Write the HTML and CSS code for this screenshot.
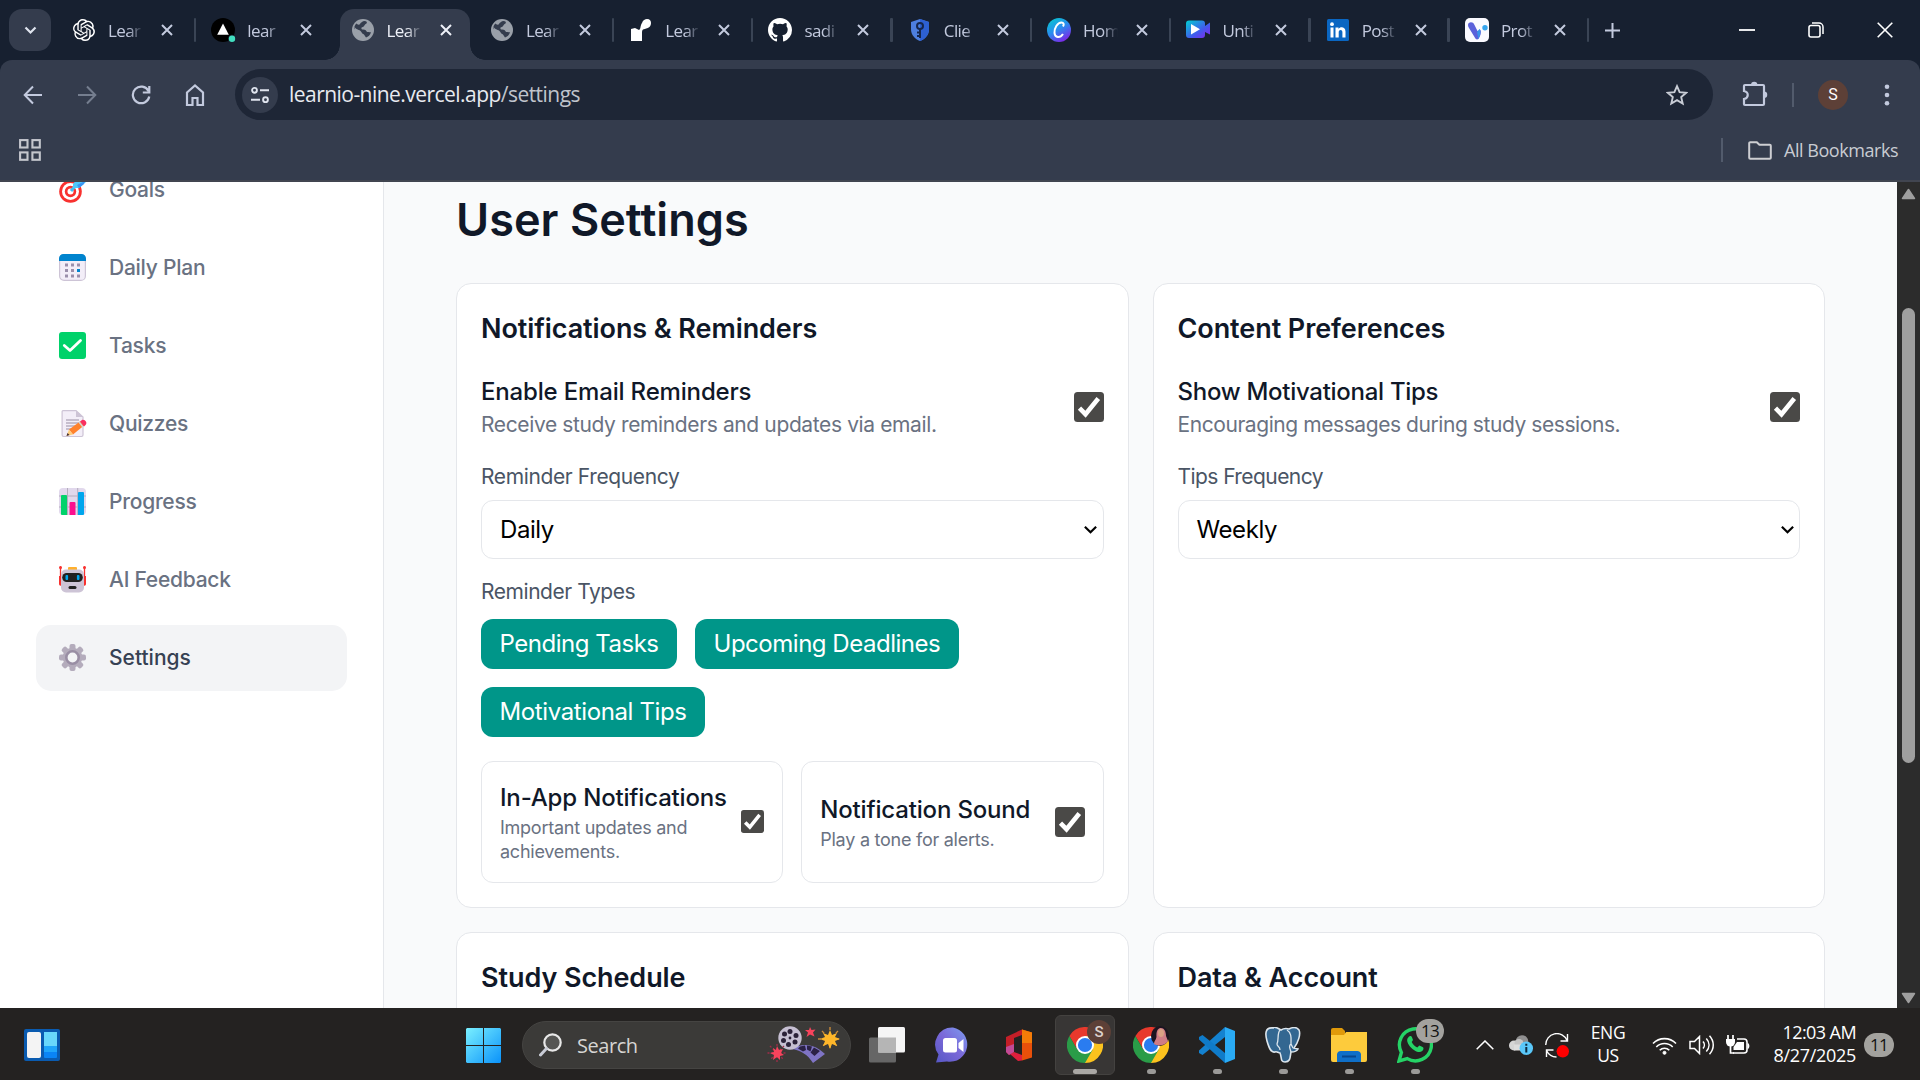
FILE: index.html
```html
<!DOCTYPE html>
<html lang="en">
<head>
<meta charset="utf-8">
<title>User Settings</title>
<link rel="stylesheet" href="styles.css">
</head>
<body>
<svg class="defs" aria-hidden="true">
  <defs>
    <symbol id="close" viewBox="0 0 14 14"><path d="M2 2l10 10M12 2L2 12" fill="none" stroke="currentColor" stroke-width="2"/></symbol>
    <symbol id="globe" viewBox="0 0 22 22"><circle cx="11" cy="11" r="11" fill="#9aa0a9"/><path d="M12.500 2c2 0 3 1 2 2.500-2 .5-2 3-3.500 3.500-2 0-2 1.500-1 2.500 3-.5 4.500 1 5 2.500 1.500 0 3 .5 4 0-.5 3-3 5-5 5.500-1-1-1.500-3-3-3.500-2 0-3-1.500-3-3L2 10c0-2 1-4.500 2.500-5.500C6 6 7.500 6 8 5s2.500-3 4.500-3z" fill="#343c4d"/><path d="M2.500 7.500c1 3 4 3 5.500 4s2 3 3 3.500c1 1 .5 3 0 4.500-5 0-8.500-3-8.700-8z" fill="#9aa0a9"/></symbol>
    <symbol id="tick" viewBox="0 0 30 30"><rect width="30" height="30" rx="3.500" fill="#4a4947"/><path d="M5.500 16.200l6 6L24.300 6.500" fill="none" stroke="#fff" stroke-width="4.600"/></symbol>
    <symbol id="chev" viewBox="0 0 16 10"><path d="M2 1.500l6 6 6-6" fill="none" stroke="currentColor" stroke-width="2.300"/></symbol>
    <symbol id="chrome" viewBox="0 0 36 36"><path d="M18 18L33.600 9A18 18 0 0 1 18 36z" fill="#fcc31e"/><path d="M18 9h15.600L25.800 22.500z" fill="#fcc31e"/><path d="M18 9h15.600A18 18 0 0 0 2.400 9l7.800 13.500z" fill="#e8392c"/><path d="M10.200 22.500L2.400 9A18 18 0 0 0 18 36l7.800-13.500z" fill="#2a9c48"/><circle cx="18" cy="18" r="9" fill="#fff"/><circle cx="18" cy="18" r="7.100" fill="#2a7cf0"/></symbol>
  </defs>
</svg>

<header class="chrome">
  <div class="tabstrip">
    <div class="tab-search"><svg width="13" height="9" viewBox="0 0 13 9"><path d="M1.500 1.500l5 5 5-5" fill="none" stroke="#dfe4ee" stroke-width="2.200"/></svg></div>
    <div class="tab sep"><svg class="fav g" viewBox="0 0 24 24"><path fill="#fff" d="M22.2819 9.8211a5.9847 5.9847 0 0 0-.5157-4.9108 6.0462 6.0462 0 0 0-6.5098-2.9A6.0651 6.0651 0 0 0 4.9807 4.1818a5.9847 5.9847 0 0 0-3.9977 2.9 6.0462 6.0462 0 0 0 .7427 7.0966 5.98 5.98 0 0 0 .511 4.9107 6.051 6.051 0 0 0 6.5146 2.9001A5.9847 5.9847 0 0 0 13.2599 24a6.0557 6.0557 0 0 0 5.7718-4.2058 5.9894 5.9894 0 0 0 3.9977-2.9001 6.0557 6.0557 0 0 0-.7475-7.0729zm-9.022 12.6081a4.4755 4.4755 0 0 1-2.8764-1.0408l.1419-.0804 4.7783-2.7582a.7948.7948 0 0 0 .3927-.6813v-6.7369l2.02 1.1686a.071.071 0 0 1 .038.052v5.5826a4.504 4.504 0 0 1-4.4945 4.4944zm-9.6607-4.1254a4.4708 4.4708 0 0 1-.5346-3.0137l.142.0852 4.783 2.7582a.7712.7712 0 0 0 .7806 0l5.8428-3.3685v2.3324a.0804.0804 0 0 1-.0332.0615L9.74 19.9502a4.4992 4.4992 0 0 1-6.1408-1.6464zM2.3408 7.8956a4.485 4.485 0 0 1 2.3655-1.9728V11.6a.7664.7664 0 0 0 .3879.6765l5.8144 3.3543-2.0201 1.1685a.0757.0757 0 0 1-.071 0l-4.8303-2.7865A4.504 4.504 0 0 1 2.3408 7.872zm16.5963 3.8558L13.1038 8.364 15.1192 7.2a.0757.0757 0 0 1 .071 0l4.8303 2.7913a4.4944 4.4944 0 0 1-.6765 8.1042v-5.6772a.79.79 0 0 0-.407-.667zm2.0107-3.0231l-.142-.0852-4.7735-2.7818a.7759.7759 0 0 0-.7854 0L9.409 9.2297V6.8974a.0662.0662 0 0 1 .0284-.0615l4.8303-2.7866a4.4992 4.4992 0 0 1 6.6802 4.66zM8.3065 12.863l-2.02-1.1638a.0804.0804 0 0 1-.038-.0567V6.0742a4.4992 4.4992 0 0 1 7.3757-3.4537l-.142.0805L8.704 5.459a.7948.7948 0 0 0-.3927.6813zm1.0976-2.3654l2.602-1.4998 2.6069 1.4998v2.9994l-2.5974 1.4997-2.6067-1.4997Z"/></svg><span class="tt">Lear</span><svg class="x"><use href="#close"/></svg></div>
    <div class="tab"><svg class="fav" viewBox="0 0 24 24"><circle cx="12" cy="12" r="12"/><path d="M12 5.500l5.800 11.200H6.200z" fill="#fff"/><circle cx="21" cy="20.800" r="4" fill="#172030"/><circle cx="21" cy="20.800" r="3.200" fill="#42dfc0"/></svg><span class="tt">lear</span><svg class="x"><use href="#close"/></svg></div>
    <div class="tab active"><svg class="fav g"><use href="#globe"/></svg><span class="tt">Lear</span><svg class="x"><use href="#close"/></svg></div>
    <div class="tab sep"><svg class="fav g"><use href="#globe"/></svg><span class="tt">Lear</span><svg class="x"><use href="#close"/></svg></div>
    <div class="tab sep"><svg class="fav" viewBox="0 0 24 24"><path d="M2 11l4-1 4 2c2-1 1-4 3-7 1-3 3-4 5-4 3 0 4 2 4 4 0 4-3 5-6 6-2 0-3 1-3 3v9H2z" fill="#fff"/></svg><span class="tt">Lear</span><svg class="x"><use href="#close"/></svg></div>
    <div class="tab sep"><svg class="fav" viewBox="0 0 16 16"><path fill="#fff" d="M8 0C3.580 0 0 3.580 0 8c0 3.540 2.290 6.530 5.470 7.590.4.070.55-.17.55-.38v-1.490c-2.010.37-2.530-.49-2.690-.94-.09-.23-.48-.94-.82-1.130-.28-.15-.68-.52-.01-.53.63-.01 1.080.58 1.230.82.72 1.210 1.870.87 2.330.66.07-.52.28-.87.51-1.070-1.780-.2-3.640-.89-3.640-3.950 0-.87.31-1.590.82-2.150-.08-.2-.36-1.020.08-2.120 0 0 .67-.21 2.200.82a7.600 7.600 0 0 1 4 0c1.530-1.040 2.200-.82 2.200-.82.44 1.100.16 1.920.08 2.120.51.56.82 1.270.82 2.150 0 3.070-1.870 3.750-3.650 3.950.29.25.54.73.54 1.480v2.200c0 .21.15.46.55.38A8.010 8.010 0 0 0 16 8c0-4.420-3.580-8-8-8z"/></svg><span class="tt">sadi</span><svg class="x"><use href="#close"/></svg></div>
    <div class="tab sep"><svg class="fav" viewBox="0 0 24 24"><path d="M12 1l9 3v7c0 6-4 10-9 12-5-2-9-6-9-12V4z" fill="#4d7fe0"/><path d="M12 1l9 3v7c0 6-4 10-9 12z" fill="#2d60d2"/><circle cx="12" cy="8" r="3" fill="none" stroke="#15264c" stroke-width="2"/><path d="M12 11v9M12 14.500h-3M12 18h-3" stroke="#15264c" stroke-width="2"/></svg><span class="tt">Clie</span><svg class="x"><use href="#close"/></svg></div>
    <div class="tab sep"><svg class="fav" viewBox="0 0 24 24"><defs><linearGradient id="cv" x1="0" y1="0" x2=".6" y2="1"><stop offset="0" stop-color="#00d0ca"/><stop offset=".55" stop-color="#2a8cf0"/><stop offset="1" stop-color="#7a2be8"/></linearGradient></defs><circle cx="12" cy="12" r="12" fill="url(#cv)"/><path d="M16 8.500c1.500-2.500.5-4-1.500-4-4 0-7.500 6-7 10.500.4 5 5.500 5.500 8.500 1" fill="none" stroke="#fff" stroke-width="2"/></svg><span class="tt">Hom</span><svg class="x"><use href="#close"/></svg></div>
    <div class="tab sep"><svg class="fav" viewBox="0 0 24 24"><defs><linearGradient id="vd" x1="0" y1="0" x2="1" y2="1"><stop offset="0" stop-color="#00cfd0"/><stop offset=".6" stop-color="#4358ee"/><stop offset="1" stop-color="#8b22ec"/></linearGradient></defs><path d="M3 2.500h13a3 3 0 0 1 3 3V8l5-3.500v12L19 14v3a3 3 0 0 1-3 3H3a3 3 0 0 1-3-3V5.500a3 3 0 0 1 3-3z" fill="url(#vd)"/><path d="M5 6v10.500l9-5.200z" fill="#fff"/></svg><span class="tt">Unti</span><svg class="x"><use href="#close"/></svg></div>
    <div class="tab sep"><svg class="fav" viewBox="0 0 24 24"><rect x="1" y="1" width="22" height="22" rx="1.500" fill="#0a66c2"/><path d="M4.500 9.500h3v10h-3zM9.500 9.500h3v1.400c1.600-2.600 7-2.300 7 2.600v6h-3.100v-5.300c0-3-3.700-2.800-3.700 0v5.300H9.500z" fill="#fff"/><circle cx="6" cy="6.200" r="1.900" fill="#fff"/></svg><span class="tt">Post</span><svg class="x"><use href="#close"/></svg></div>
    <div class="tab sep"><svg class="fav" viewBox="0 0 24 24"><rect width="24" height="24" rx="5" fill="#fafaff"/><path d="M3 7c0-3 5-4 6.500 0l3 6 3-1c1 2 0 6-2 9-2 1-3 0-4-2L4 10C3.300 9 3 8 3 7z" fill="#5a60da"/><path d="M12 14c1-1 2-3 3-3 1 3 0 7-1.500 10z" fill="#3793e8"/><circle cx="20" cy="9.800" r="2.700" fill="#36a5ee"/></svg><span class="tt">Prot</span><svg class="x"><use href="#close"/></svg></div>
    <svg class="newtab" width="17" height="17" viewBox="0 0 17 17"><path d="M8.500 1v15M1 8.500h15" stroke="#c3cade" stroke-width="2"/></svg>
    <div class="winbtns">
      <svg width="16" height="18" viewBox="0 0 16 18"><path d="M0 9h16" stroke="#fff" stroke-width="1.800"/></svg>
      <svg width="16" height="18" viewBox="0 0 16 18"><rect x="1" y="4.500" width="11" height="11.500" rx="2" fill="none" stroke="#fff" stroke-width="1.600"/><path d="M4 2h7a4 4 0 0 1 4 4v7" fill="none" stroke="#fff" stroke-width="1.500"/></svg>
      <svg width="16" height="18" viewBox="0 0 16 18"><path d="M.7 1.700l14.600 14.600M15.300 1.700L.7 16.300" stroke="#fff" stroke-width="1.600"/></svg>
    </div>
  </div>

  <div class="toolbar-wrap"><div class="toolbar">
    <div class="navbtns">
      <svg width="20" height="20" viewBox="0 0 20 20"><path d="M19 10H2M10 1.500L1.700 10l8.300 8.500" fill="none" stroke="#c3cade" stroke-width="2"/></svg>
      <svg width="20" height="20" viewBox="0 0 20 20"><path d="M1 10h17M10 1.500l8.300 8.500-8.300 8.500" fill="none" stroke="#757e8f" stroke-width="2"/></svg>
      <svg width="20" height="20" viewBox="0 0 20 20"><path d="M18.300 11.500A8.300 8.300 0 1 1 17.500 6M18.300 1v6.500h-6.500" fill="none" stroke="#c3cade" stroke-width="2.200"/></svg>
      <svg width="20" height="22" viewBox="0 0 20 22"><path d="M2 8.500l8-7 8 7V21h-5.500v-7h-5v7H2z" fill="none" stroke="#c3cade" stroke-width="2.200"/></svg>
    </div>
    <div class="omnibox">
      <span class="tune"><svg width="18" height="18" viewBox="0 0 18 18" fill="none" stroke="#dfe4ee" stroke-width="1.900"><circle cx="3.500" cy="4.300" r="2.400"/><path d="M9 4.300h9M0 13.700h9"/><circle cx="14.500" cy="13.700" r="2.400"/></svg></span>
      <span class="url">learnio-nine.vercel.app<span class="path">/settings</span></span>
      <svg class="star" width="22" height="22" viewBox="0 0 22 22"><path d="M11 2.200l2.600 6 6.500.6-4.900 4.300 1.500 6.400-5.700-3.400-5.700 3.400 1.500-6.400-4.900-4.300 6.500-.6z" fill="none" stroke="#c9cdd6" stroke-width="1.900"/></svg>
    </div>
    <svg class="puzzle" width="26" height="26" viewBox="0 0 26 26"><path d="M3 4h18a1 1 0 0 1 1 1v18a1 1 0 0 1-1 1H3a1 1 0 0 1-1-1v-5c5-1 5-7 0-8V5a1 1 0 0 1 1-1z" fill="none" stroke="#c3cade" stroke-width="2.200"/><path d="M9 4a3.200 3.200 0 0 1 6.400 0zM22 10.500a3.200 3.200 0 0 1 0 6.500z" fill="#c3cade"/></svg>
    <span class="tsep"></span>
    <span class="avatar">S</span>
    <svg class="dots" width="6" height="22" viewBox="0 0 6 22" fill="#c3cade"><circle cx="3" cy="2.700" r="2.300"/><circle cx="3" cy="11" r="2.300"/><circle cx="3" cy="19.300" r="2.300"/></svg>
  </div></div>

  <div class="bookmarks">
    <svg width="22" height="22" viewBox="0 0 22 22" fill="none" stroke="#c4c6cd" stroke-width="2.100"><rect x="1.100" y="1.100" width="7.400" height="7.400"/><rect x="13.400" y="1.100" width="7.400" height="7.400"/><rect x="1.100" y="13.400" width="7.400" height="7.400"/><rect x="13.400" y="13.400" width="7.400" height="7.400"/></svg>
    <span class="tsep push"></span>
    <svg class="folder" width="24" height="19" viewBox="0 0 24 19"><path d="M2.200 1.200h6.600l2.600 2.600h10.400a1 1 0 0 1 1 1v12a1 1 0 0 1-1 1H2.200a1 1 0 0 1-1-1V2.200a1 1 0 0 1 1-1z" fill="none" stroke="#cdced2" stroke-width="2"/></svg>
    <span class="allb">All Bookmarks</span>
  </div>
</header>

<div class="view">
  <aside class="side">
    <nav class="nav">
      <a class="item"><svg viewBox="0 0 27 27"><circle cx="11.500" cy="15.500" r="11.300" fill="#f8312f"/><circle cx="11.500" cy="15.500" r="8.500" fill="#fff"/><circle cx="11.500" cy="15.500" r="5.700" fill="#f8312f"/><circle cx="11.500" cy="15.500" r="3" fill="#fff"/><path d="M12 15l6-7" stroke="#3fc0f5" stroke-width="3"/><path d="M14 12V8l6-7 1 4 6 1-7 6z" fill="#4fc8fa"/><path d="M18 9l8-4-1 3-5 4z" fill="#3a96f5"/></svg>Goals</a>
      <a class="item"><svg viewBox="0 0 27 27"><rect x=".6" y=".6" width="25.800" height="25.800" rx="4.500" fill="#f3eef8" stroke="#cdc4d6" stroke-width="1.200"/><path d="M0 7V4.500A4.500 4.500 0 0 1 4.500 0h18A4.500 4.500 0 0 1 27 4.500V7z" fill="#0084ce"/><g fill="#9b8fab"><path d="M6 9.500h3v3H6zM12 9.500h3v3h-3zM18 9.500h3v3h-3zM6 15h3v3H6zM12 15h3v3h-3zM6 20.500h3v3H6zM12 20.500h3v3h-3zM18 20.500h3v3h-3z"/></g><path d="M18 15h3v3h-3z" fill="#0084ce"/></svg>Daily Plan</a>
      <a class="item"><svg viewBox="0 0 27 27"><rect width="27" height="27" rx="3" fill="#00d26a"/><path d="M5.300 13.500l5.700 5 10.500-10" fill="none" stroke="#fff" stroke-width="2.800" stroke-linecap="round" stroke-linejoin="round"/></svg>Tasks</a>
      <a class="item"><svg viewBox="0 0 27 27"><path d="M4 .6h13l7 6.500v18a1.400 1.400 0 0 1-1.400 1.400H4.500a1.400 1.400 0 0 1-1.400-1.400V1.500a1 1 0 0 1 .9-.9z" fill="#f3eef8" stroke="#cdc4d6" stroke-width="1.200"/><path d="M17 .6l7 6.500h-7z" fill="#cdc4d6"/><path d="M7 10h13M7 13h13M7 16h13M7 19h8" stroke="#998ea4" stroke-width="1.200"/><path d="M10 19.500l11-8 4 4-11 9z" fill="#ff822d"/><path d="M10 19.500l4 5-6.500 1.500z" fill="#ffce7c"/><path d="M7.500 26l1-3 2 2z" fill="#402a32"/><path d="M21 11.500l2-1.500c3-1 6 3 3.500 5l-1.500 1.500z" fill="#f92f60"/><path d="M20 12l4 5" stroke="#d3d3d3" stroke-width="1.500"/></svg>Quizzes</a>
      <a class="item"><svg viewBox="0 0 27 27"><rect width="27" height="27" rx="4" fill="#e1d8ec"/><path d="M0 8h27M0 19h27M8.500 0v27M18.700 0v27" stroke="#b4acbc" stroke-width="1"/><path d="M2 8a1 1 0 0 1 1-1h4a1 1 0 0 1 1 1v19H3a1 1 0 0 1-1-1z" fill="#00d26a"/><path d="M10.500 15a1 1 0 0 1 1-1h4a1 1 0 0 1 1 1v12h-6z" fill="#fc0f8e"/><path d="M19 5a1 1 0 0 1 1-1h4a1 1 0 0 1 1 1v21a1 1 0 0 1-1 1h-5z" fill="#00a6ed"/></svg>Progress</a>
      <a class="item"><svg viewBox="0 0 27 27"><path d="M1.500.5v17M25.500.5v17" stroke="#f8312f" stroke-width="1.300"/><path d="M0 10h3v10c-2 0-3-1-3-2zM27 10h-3v10c2 0 3-1 3-2z" fill="#f8312f"/><circle cx="1.500" cy="1.500" r="1.500" fill="#f8312f"/><circle cx="25.500" cy="1.500" r="1.500" fill="#f8312f"/><rect x="9" y="1" width="9" height="4" rx="1" fill="#ffb02e"/><rect x="2" y="3.500" width="23" height="23" rx="5" fill="#cdc4d6"/><rect x="3.200" y="7" width="20.600" height="9" rx="4.500" fill="#212121"/><rect x="6.500" y="9" width="2.600" height="5" rx="1" fill="#00a6ed"/><rect x="17.900" y="9" width="2.600" height="5" rx="1" fill="#00a6ed"/><rect x="9.500" y="20" width="8" height="3" rx="1.500" fill="#212121"/></svg>AI Feedback</a>
      <a class="item on"><svg viewBox="0 0 27 27"><g fill="#b4acbc"><rect id="cog" x="10.500" y="0" width="6" height="27" rx="2"/><use href="#cog" transform="rotate(45 13.500 13.500)"/><use href="#cog" transform="rotate(90 13.500 13.500)"/><use href="#cog" transform="rotate(135 13.500 13.500)"/><circle cx="13.500" cy="13.500" r="9.800"/></g><circle cx="13.500" cy="13.500" r="6.200" fill="#f3f4f6" stroke="#998ea4" stroke-width="2.600"/></svg>Settings</a>
    </nav>
  </aside>

  <main class="main">
    <h1>User Settings</h1>
    <div class="cards">
      <section class="card">
        <h2>Notifications &amp; Reminders</h2>
        <div class="row"><div><p class="name">Enable Email Reminders</p><p class="note n1">Receive study reminders and updates via email.</p></div><svg class="check"><use href="#tick"/></svg></div>
        <p class="label">Reminder Frequency</p>
        <div class="select">Daily<svg><use href="#chev"/></svg></div>
        <p class="label types">Reminder Types</p>
        <div class="pills"><span class="pill">Pending Tasks</span><span class="pill">Upcoming Deadlines</span><span class="pill tipsp">Motivational Tips</span></div>
        <div class="pair">
          <div class="box"><div><p class="name">In-App Notifications</p><p class="tiny">Important updates and<br>achievements.</p></div><svg class="check small"><use href="#tick"/></svg></div>
          <div class="box"><div><p class="name">Notification Sound</p><p class="tiny">Play a tone for alerts.</p></div><svg class="check"><use href="#tick"/></svg></div>
        </div>
      </section>
      <section class="card">
        <h2>Content Preferences</h2>
        <div class="row"><div><p class="name show">Show Motivational Tips</p><p class="note">Encouraging messages during study sessions.</p></div><svg class="check"><use href="#tick"/></svg></div>
        <p class="label tips">Tips Frequency</p>
        <div class="select">Weekly<svg><use href="#chev"/></svg></div>
      </section>
      <section class="card"><h2>Study Schedule</h2></section>
      <section class="card"><h2>Data &amp; Account</h2></section>
    </div>
  </main>

  <div class="scroll">
    <svg width="15" height="12" viewBox="0 0 15 12"><path d="M7.500 1.500L13.500 10.500h-12z" fill="#9f9f9f" stroke="#9f9f9f" stroke-linejoin="round" stroke-width="1.500"/></svg>
    <span class="thumb"></span>
    <svg class="down" width="15" height="12" viewBox="0 0 15 12"><path d="M7.500 10.500L13.500 1.500h-12z" fill="#9f9f9f" stroke="#9f9f9f" stroke-linejoin="round" stroke-width="1.500"/></svg>
  </div>
</div>

<footer class="taskbar">
  <svg class="widgets" width="36" height="32" viewBox="0 0 36 32"><rect width="36" height="32" rx="2" fill="#0a5bb0"/><rect x="3" y="3" width="14" height="26" rx="2" fill="#f4f4f4"/><rect x="20" y="3" width="13" height="26" rx="1" fill="#0a84f5"/><path d="M20 17h13v6H20z" fill="#1fa5fa"/><path d="M20 3h13v14H20z" fill="#69d8fb"/></svg>
  <svg class="start" width="35" height="35" viewBox="0 0 35 35"><defs><linearGradient id="win" x1="0" y1="0" x2="1" y2="1"><stop offset="0" stop-color="#7af0ff"/><stop offset="1" stop-color="#0a92fa"/></linearGradient></defs><path d="M1 0h16v17H0V1zM18 0h16l1 1v16H18zM0 18h17v17H1l-1-1zM18 18h17v16l-1 1H18z" fill="url(#win)"/></svg>
  <div class="search">
    <svg width="23" height="24" viewBox="0 0 23 24"><circle cx="13.500" cy="9.500" r="8.200" fill="#555553" stroke="#e8e8e8" stroke-width="2.200"/><path d="M7.500 15.500L1.500 22" stroke="#c9ccd6" stroke-width="3" stroke-linecap="round"/></svg>
    <span>Search</span>
    <svg class="art" width="76" height="38" viewBox="0 0 76 38"><path d="M24 23C38 15 50 20 58 28L46 37C41 29 34 24 24 23z" fill="#7f74c4"/><path d="M33 20.500l5-1 1 4.500-3 1.500-5-3zM40 19.500l5 1-1.500 5-3.500-2zM47 21.500l6 3.500-5.500 5-4-3.500zM52 27l-5 6" fill="#2b2145"/><circle cx="23" cy="12" r="11.700" fill="#c6bfd2"/><g fill="#2b2138"><circle cx="23" cy="5.500" r="2.500"/><circle cx="29" cy="9.500" r="2.500"/><circle cx="28" cy="16" r="2.500"/><circle cx="21.500" cy="18.500" r="2.500"/><circle cx="16.500" cy="14.500" r="2.500"/><circle cx="17.500" cy="8" r="2.500"/><circle cx="23" cy="12" r="1.400"/></g><path d="M63 1v24M51 13h24M55 5l16 16M71 5L55 21" stroke="#c98a3a" stroke-width="1.400" stroke-dasharray="3 3"/><path d="M63 4l2 5 5-2-2 4 5 2-5 2 2 5-5-2-2 5-2-5-5 2 2-5-5-2 5-2-2-4 5 2z" fill="#fdb62a"/><path d="M10 18v19M.5 27h19M3 20l14 14M17 20L3 34" stroke="#a02c48" stroke-width="1.300" stroke-dasharray="2 2"/><path d="M10 20l2 4 4-1-2 4 3 2-4 1 0 4-3-3-4 3 1-5-4-2 4-1-1-4 3 2z" fill="#f8435c"/><path d="M43 1l1.500 3 4-.5-2.500 3 1.500 4L43 8.500 39.500 11 41 6.500 38 4h4z" fill="#f8435c"/></svg>
  </div>
  <div class="apps">
    <span class="app"><svg width="36" height="36" viewBox="0 0 36 36"><rect y="10.500" width="27" height="25" rx="1.500" fill="#666"/><rect x="9" y="0" width="27" height="25.500" rx="1.500" fill="#f5f5f5"/><path d="M9 10.500h18v15H9z" fill="#b5b5b5"/></svg></span>
    <span class="app"><svg width="36" height="36" viewBox="0 0 36 36"><defs><linearGradient id="tm" x1="1" y1="0" x2="0" y2="1"><stop offset="0" stop-color="#7d9df0"/><stop offset=".5" stop-color="#7a68d8"/><stop offset="1" stop-color="#5557c4"/></linearGradient></defs><path d="M18 .5A17.200 17.200 0 1 1 12 34.500L1 35.500l2.500-8A17 17 0 0 1 18 .5z" fill="url(#tm)"/><rect x="8" y="11" width="14" height="14.500" rx="2.500" fill="#fff"/><path d="M23.500 16l5-4v13l-5-4z" fill="#fff"/></svg></span>
    <span class="app"><svg width="26" height="32" viewBox="0 0 26 32"><path d="M0 8L16 .5V6L8 9v14L3 26l-3-3z" fill="#c41f28"/><path d="M16 .5l10 3v25l-10 3V6z" fill="#e8500a"/><path d="M16 .5l10 3V14H16z" fill="#f57c08"/><path d="M4 25l4-2 8 3v5.500l-4 .5z" fill="#de1f3c"/><path d="M0 18l8-3v8L3 26l-3-3z" fill="#c24a96"/></svg></span>
    <span class="app current"><svg width="36" height="36"><use href="#chrome"/></svg><b class="who">S</b><i></i></span>
    <span class="app"><svg width="36" height="36"><use href="#chrome"/></svg><svg class="photo" viewBox="0 0 18 20"><ellipse cx="9" cy="10" rx="9" ry="10" fill="#1b1420"/><path d="M3 18c0-3 2-4 2.500-7C5 5 7 2 10 2s5 3 5 8l2 5c-2 4-9 6-14 3z" fill="#cf7c86"/><ellipse cx="10" cy="7" rx="3" ry="4" fill="#d9a184"/></svg><i></i></span>
    <span class="app"><svg width="36" height="36" viewBox="0 0 36 36"><path d="M26 0l-26 23.500v2.500l3.500 2L26 10z" fill="#1482d0"/><path d="M26 36L0 12.500V10l3.500-2L26 26z" fill="#0f7bc9"/><path d="M26 0l10 4v28l-10 4z" fill="#2aabf5"/></svg><i></i></span>
    <span class="app"><svg width="36" height="36" viewBox="0 0 36 36"><path d="M8 1C0 0 0 7 2 14c2 7 4 12 8 11 2-1 3 1 5 1 2 4 0 9 5 9 6 0 5-6 6-10 3 0 6-1 7-3l-4-1c4-5 7-14 5-18-3-4-8-2-10-1-3-1-5-1-8 1-3-2-5-3-8-3z" fill="#336791" stroke="#dce5ec" stroke-width="1.600"/><path d="M15 3c-3 3-1 10-3 14 0 3 3 2 3 6M22 3c5 3 4 9 4 14l2 4M26 17c-3 2-1 4 0 8" fill="none" stroke="#dce5ec" stroke-width="1.300"/></svg><i></i></span>
    <span class="app"><svg width="36" height="34" viewBox="0 0 36 34"><path d="M0 2a2 2 0 0 1 2-2h9l3 3v4H0z" fill="#e09a0a"/><path d="M0 7h13l2-3h21v28a2 2 0 0 1-2 2H2a2 2 0 0 1-2-2z" fill="#fdcb3c"/><path d="M6 34V26a4 4 0 0 1 4-3h16a4 4 0 0 1 4 3v8z" fill="#0f6fc8"/><path d="M11 28.500h14" stroke="#07478e" stroke-width="2"/></svg><i></i></span>
    <span class="app"><svg width="36" height="36" viewBox="0 0 36 36"><path d="M2 34l2.400-8.500A16 16 0 1 1 10.300 31.600z" fill="none" stroke="#25d366" stroke-width="3.400"/><path d="M12 9.500c1-1 2.500-.5 3 .8l1 2.700-1.300 2c1.300 2.600 3 4.300 5.600 5.600l2-2 3.300 1.500c1.500.8 1 2.800-.4 4C20 28.500 8 17 10.500 11.500z" fill="#25d366"/></svg><b class="count">13</b><i></i></span>
  </div>
  <div class="tray">
    <svg width="18" height="10" viewBox="0 0 18 10"><path d="M.7 9.300L9 1l8.300 8.300" fill="none" stroke="#fff" stroke-width="1.500"/></svg>
    <svg class="cloud" width="24" height="20" viewBox="0 0 24 20"><circle cx="13" cy="6.500" r="6.300" fill="#8f8f8f"/><circle cx="5" cy="10.500" r="5" fill="#d5d5d5"/><circle cx="10" cy="8.500" r="4.500" fill="#c5c5c5"/><path d="M5 15.500h8v-6H5z" fill="#ddd"/><circle cx="17.300" cy="13.300" r="6.700" fill="#5ac8fa"/><path d="M17.300 12v5.500M17.300 8.800v2" stroke="#0c2b40" stroke-width="2"/></svg>
    <svg class="sync" width="24" height="25" viewBox="0 0 24 25"><path d="M.8 12A11 11 0 0 1 22 7.500M22.500 1v7h-7M1.500 24v-7h7M1.500 17.500c2 4 5.500 6.500 10 6.500" fill="none" stroke="#fff" stroke-width="1.400"/><circle cx="17.800" cy="18.300" r="6.200" fill="#fe0000"/></svg>
    <span class="lang">ENG<br>US</span>
    <svg class="wifi" width="25" height="19" viewBox="0 0 25 19" fill="none" stroke="#fff" stroke-width="1.600"><path d="M1 7.500a16 16 0 0 1 23 0M4.300 11a11.500 11.500 0 0 1 16.400 0M7.700 14.200a6.800 6.800 0 0 1 9.600 0"/><circle cx="12.500" cy="16.800" r="1.500" fill="#fff" stroke-width="1"/></svg>
    <svg class="vol" width="25" height="20" viewBox="0 0 25 20" fill="none" stroke="#fff" stroke-width="1.500"><path d="M1 6.500h4.500L10.500 1.500v17l-5-5H1zM14 6.500c1.800 2 1.800 5 0 7M17.300 3.500c3.600 4 3.600 9 0 13M20.500.8c5 5.500 5 13 0 18.400"/></svg>
    <svg class="bat" width="25" height="20" viewBox="0 0 25 20"><path d="M3 0v4M8 0v4M5.500 8v10H9" fill="none" stroke="#fff" stroke-width="1.700"/><path d="M1 4h9v3a4 4 0 0 1-9 0z" fill="#fff"/><path d="M12 4h7a3 3 0 0 1 3 3v8a3 3 0 0 1-3 3H8" fill="none" stroke="#fff" stroke-width="1.600"/><path d="M12 7h7v8H8.500v-3z" fill="#fff"/><path d="M22.500 8c2.500 0 2.500 6 0 6z" fill="#fff"/></svg>
    <span class="clock">12:03 AM<br><span class="date">8/27/2025</span></span>
    <span class="bell">11</span>
  </div>
</footer>
</body>
</html>
```
FILE: styles.css
```css
* { box-sizing: border-box; }
body { margin: 0; width: 1920px; height: 1080px; overflow: hidden; display: flex; flex-direction: column; font-family: Inter, "Liberation Sans", sans-serif; background: #f9fafb; }
p, h1, h2 { margin: 0; white-space: nowrap; }
svg { display: block; flex: none; }
.defs { position: absolute; width: 0; height: 0; }

/* browser frame */
.chrome { height: 182px; flex: none; background: #343c4d; border-bottom: 2px solid #414550; font-family: "Open Sans", "Noto Sans", sans-serif; }
.tabstrip { height: 60px; background: #172030; display: flex; align-items: center; padding-left: 9px; }
.tab-search { width: 42px; height: 42px; border-radius: 13px; background: #343c4d; display: flex; align-items: center; justify-content: center; margin-right: 5px; }
.tab { width: 139.300px; height: 60px; display: flex; align-items: center; position: relative; padding-left: 16px; color: #c3cade; }
.tab.sep::after { content: ""; position: absolute; right: -1px; top: 18px; width: 2.500px; height: 24px; background: #3a4455; border-radius: 1px; }
.fav { width: 24px; height: 24px; margin-right: 12px; overflow: visible; }
.fav.g { width: 22px; height: 22px; margin: 0 13px 0 1px; }
.tt { width: 36px; white-space: nowrap; font-size: 17px; letter-spacing: -.6px; line-height: 28px; padding-top: 2px; -webkit-mask-image: linear-gradient(90deg, #000 55%, transparent 98%); mask-image: linear-gradient(90deg, #000 55%, transparent 98%); }
.x { width: 14px; height: 14px; margin-left: 16px; }
.active { color: #eef1f8; z-index: 1; }
.active::before { content: ""; position: absolute; z-index: -1; left: 5px; top: 9px; width: 130px; height: 51px; border-radius: 14px 14px 0 0; background: #343c4d; }
.active::after { content: ""; position: absolute; z-index: -1; left: -10px; bottom: 0; width: 160px; height: 15px; background: radial-gradient(circle at 0 0, transparent 14.500px, #343c4d 15px) left / 15px 15px no-repeat, radial-gradient(circle at 100% 0, transparent 14.500px, #343c4d 15px) right / 15px 15px no-repeat; }
.newtab { margin-left: 16px; }
.winbtns { margin-left: auto; display: flex; gap: 53px; padding-right: 27px; }
.toolbar-wrap { background: #172030; }
.toolbar { height: 69px; display: flex; align-items: center; background: #343c4d; border-radius: 12px 12px 0 0; }
.navbtns { width: 235px; display: flex; align-items: center; gap: 34px; padding-left: 23px; }
.omnibox { width: 1478px; height: 51px; border-radius: 26px; background: #1e2636; display: flex; align-items: center; padding-left: 7px; }
.tune { width: 36px; height: 36px; border-radius: 50%; background: #343c4d; display: flex; align-items: center; justify-content: center; margin-right: 11px; }
.url { font-size: 21px; letter-spacing: -.54px; color: #e8eaf0; line-height: 40px; margin-top: -2px; }
.path { color: #c0c4cc; }
.star { margin-left: auto; margin-right: 25px; }
.puzzle { margin-left: 29px; margin-top: -2px; }
.tsep { width: 2px; height: 24px; background: #525b6c; margin-left: 24px; }
.avatar { width: 30px; height: 30px; border-radius: 50%; background: #5d4037; color: #fff; font: 16px/30px Roboto, sans-serif; text-align: center; margin-left: 24px; }
.dots { margin-left: 36px; }
.bookmarks { height: 42px; display: flex; align-items: center; padding: 0 22px 0 19px; }
.push { margin-left: auto; }
.folder { margin: 0 12px 0 25px; }
.allb { font-size: 18px; letter-spacing: -.46px; color: #c9ccd3; margin-top: -1px; }

/* page */
.view { flex: 1; min-height: 0; display: flex; overflow: hidden; }
.side { width: 384px; background: #fff; border-right: 1px solid #e5e7eb; padding-left: 36px; flex: none; }
.nav { display: flex; flex-direction: column; gap: 12px; margin-top: -25.500px; }
.item { width: 311px; height: 66px; border-radius: 15px; padding-left: 23px; display: flex; align-items: center; gap: 23px; color: #6a7282; font-size: 21px; font-weight: 500; letter-spacing: -.25px; }
.item svg { width: 27px; height: 27px; overflow: visible; }
.on { background: #f3f4f6; color: #364153; letter-spacing: 0; }
.main { width: 1513px; flex: none; padding: 11px 72px 0; }
h1 { font-size: 45px; line-height: 54px; font-weight: 600; color: #101828; letter-spacing: .05px; margin-bottom: 36px; }
.cards { display: grid; grid-template-columns: 1fr 1fr; gap: 24px; grid-template-rows: 625px 200px; }
.card { background: #fff; border: 1px solid #e5e7eb; border-radius: 15px; padding: 24px; }
h2 { font-size: 27px; line-height: 42px; font-weight: 600; color: #101828; letter-spacing: -.08px; margin-bottom: 24px; }
.row { display: flex; justify-content: space-between; align-items: center; margin-bottom: 22px; }
.name { font-size: 24px; line-height: 36px; font-weight: 500; color: #101828; letter-spacing: -.17px; }
.show { letter-spacing: -.28px; }
.note { font-size: 21px; line-height: 30px; color: #6a7282; letter-spacing: -.43px; }
.n1 { letter-spacing: -.38px; }
.check { width: 30px; height: 30px; }
.check.small { width: 23px; height: 23px; margin-top: -1px; }
.label { font-size: 21px; line-height: 30px; color: #4a5565; letter-spacing: -.38px; }
.tips { letter-spacing: -.57px; }
.types { letter-spacing: -.45px; }
.select { height: 59px; margin: 8px 0 18px; border: 1px solid #e5e7eb; border-radius: 12px; display: flex; align-items: center; justify-content: space-between; padding: 0 4.500px 0 18px; font-size: 24px; letter-spacing: -.42px; color: #000; }
.select svg { width: 15px; height: 10px; }
.pills { display: flex; flex-wrap: wrap; gap: 18px; margin: 12px 0 24px; }
.pill { height: 50px; line-height: 50px; padding: 0 18.500px; border-radius: 12px; background: #009689; color: #fff; font-size: 24px; letter-spacing: -.48px; white-space: nowrap; }
.tipsp { letter-spacing: -.38px; }
.pair { display: grid; grid-template-columns: 1fr 1fr; gap: 18px; }
.box { height: 122px; border: 1px solid #e5e7eb; border-radius: 12px; padding: 0 18px; display: flex; align-items: center; justify-content: space-between; }
.tiny { font-size: 18px; line-height: 24px; color: #6a7282; letter-spacing: -.25px; }
.scroll { width: 23px; background: #2c2c2c; display: flex; flex-direction: column; align-items: center; padding: 6px 0 4px; }
.thumb { width: 13px; height: 455px; margin-top: 108px; border-radius: 7px; background: #9f9f9f; }
.down { margin-top: auto; }

/* taskbar */
.taskbar { height: 72px; flex: none; background: #242221; display: flex; align-items: center; padding: 2px 0 0 24px; font-family: "Open Sans", "Noto Sans", sans-serif; color: #fff; }
.start { margin-left: 406px; }
.search { width: 329px; height: 48px; margin-left: 21px; border-radius: 24px; background: #3b3a38; border: 1px solid #454442; display: flex; align-items: center; padding: 0 7px 0 16px; font-size: 20px; letter-spacing: -.45px; color: #d6d5d3; }
.search span { margin-left: 15px; }
.art { margin-left: auto; }
.apps { display: flex; gap: 6px; margin-left: 6px; }
.app { width: 60px; height: 60px; border-radius: 6px; display: flex; align-items: center; justify-content: center; position: relative; }
.current { background: #383635; border: 1px solid #444240; }
.app i { position: absolute; bottom: 1px; left: 50%; width: 9px; height: 5px; margin-left: -4.500px; border-radius: 2.500px; background: #9b9a98; }
.current i { width: 24px; margin-left: -12px; bottom: 0; background: #aaa8a5; }
.who { position: absolute; left: 31px; top: 4px; width: 24px; height: 24px; border-radius: 50%; background: #5d4037; font: 500 15px/24px Roboto, sans-serif; text-align: center; color: #ddd2cd; }
.photo { position: absolute; left: 30px; top: 11px; width: 18px; height: 20px; }
.count, .bell { border-radius: 12px; background: #a3a29e; color: #111; text-align: center; font-weight: 400; font-size: 17px; line-height: 24px; height: 24px; letter-spacing: -.8px; }
.count { position: absolute; left: 31px; top: 4px; width: 28px; }
.tray { display: flex; align-items: center; margin-left: 31px; }
.cloud { margin-left: 15px; }
.sync { margin-left: 12px; }
.lang { font-size: 17.500px; line-height: 23px; text-align: center; width: 50px; margin: -2px 0 0 14px; letter-spacing: -.4px; }
.wifi { margin-left: 19px; }
.vol { margin-left: 12px; }
.bat { margin-left: 11px; }
.clock { width: 106px; text-align: right; font-size: 18px; line-height: 23px; letter-spacing: -.58px; margin-top: -2px; }
.date { letter-spacing: -.3px; }
.bell { width: 30px; margin-left: 8px; }
```
